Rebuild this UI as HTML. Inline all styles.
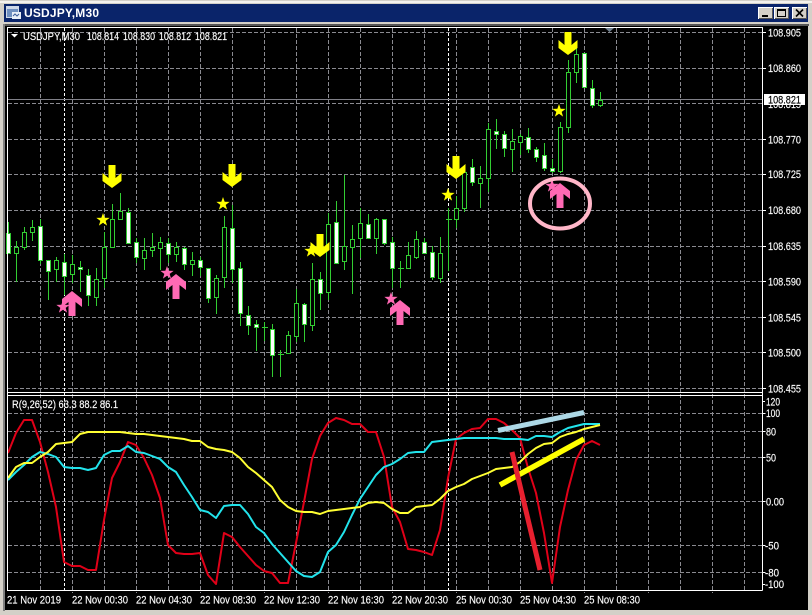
<!DOCTYPE html>
<html><head><meta charset="utf-8"><title>USDJPY,M30</title>
<style>html,body{margin:0;padding:0;background:#d4d0c8}svg{display:block}text{font-family:"Liberation Sans",sans-serif;font-size:11px;fill:#fff;stroke:#fff;stroke-width:.15}</style></head>
<body>
<svg xmlns="http://www.w3.org/2000/svg" width="812" height="615" viewBox="0 0 812 615">
<defs>
<polygon id="s" points="0,-7 1.65,-2.27 6.66,-2.16 2.66,.87 4.11,5.66 0,2.8 -4.11,5.66 -2.66,.87 -6.66,-2.16 -1.65,-2.27"/>
<polygon id="d" points="-3.5,0 3.5,0 3.5,13 9.5,8 9.5,16 0,23 -9.5,16 -9.5,8 -3.5,13"/>
<polygon id="u" points="0,0 10,8 10,16 3.5,11 3.5,25 -3.5,25 -3.5,11 -10,16 -10,8"/>
</defs>
<rect width="812" height="615" fill="#d4d0c8"/>
<rect x="0" y="1" width="812" height="2" fill="#f4f2ee"/>
<rect x="4" y="4" width="804" height="18" fill="#0a246a"/>
<rect x="3" y="24" width="806" height="2" fill="#555"/>
<rect x="3" y="24" width="2" height="587" fill="#808080"/>
<rect x="5" y="26" width="803" height="584" fill="#000"/>

<!-- title bar -->
<rect x="6" y="6" width="13" height="12" fill="#cfd8e8"/><rect x="7" y="9" width="11" height="8" fill="#6f8fc0"/><rect x="12" y="12" width="9" height="7" fill="#e8eef8"/><path d="M13 16l2-2 2 2 2-2" stroke="#3a5a9a" fill="none"/>
<text x="24" y="17" textLength="75" lengthAdjust="spacing" style="font-size:12px;font-weight:bold;stroke:none">USDJPY,M30</text>
<g shape-rendering="crispEdges">
<rect x="758" y="7" width="15" height="12" fill="#d4d0c8"/><path d="M758 18.5h15M772.5 7v12" stroke="#555"/><path d="M758 7.5h15M758.500 7v12" stroke="#fff"/><rect x="762" y="15" width="6" height="2" fill="#000"/>
<rect x="774" y="7" width="15" height="12" fill="#d4d0c8"/><path d="M774 18.500h15M788.500 7v12" stroke="#555"/><path d="M774 7.500h15M774.500 7v12" stroke="#fff"/><rect x="777.500" y="9.500" width="8" height="7" fill="none" stroke="#000"/><rect x="777" y="9" width="9" height="2" fill="#000"/>
<rect x="792" y="7" width="15" height="12" fill="#d4d0c8"/><path d="M792 18.500h15M806.500 7v12" stroke="#555"/><path d="M792 7.500h15M792.500 7v12" stroke="#fff"/>
</g>
<path d="M796 9.500l7 7M803 9.500l-7 7" stroke="#000" stroke-width="1.600"/>

<g shape-rendering="crispEdges" fill="none">
<!-- grid -->
<path stroke="#8a8a90" stroke-dasharray="4 2" d="M8 32.500H766M8 68.500H766M8 103.500H766M8 139.500H766M8 174.500H766M8 210.500H766M8 246.500H766M8 281.500H766M8 317.500H766M8 352.500H766M8 388.500H766M8 413.500H766M8 431.500H766M8 457.500H766M8 501.500H766M8 545.500H766M8 572.500H766"/>
<path stroke="#8a8a90" stroke-dasharray="4 2" d="M40.500 28V590M72.500 28V593M104.500 28V590M136.500 28V593M168.500 28V590M200.500 28V593M232.500 28V590M264.500 28V593M296.500 28V590M328.500 28V593M360.500 28V590M392.500 28V593M424.500 28V590M456.500 28V593M488.500 28V590M520.500 28V593M552.500 28V590M584.500 28V593M616.500 28V590M648.500 28V593M680.500 28V590M712.500 28V593M744.500 28V590"/>
<path stroke="#fff" stroke-dasharray="3 2" d="M64.500 28V590M448.500 28V590"/>
<path stroke="#808088" d="M8 99.500H762"/>
<!-- wicks -->
<path stroke="#32cd32" d="M8.500 222V253M16.500 241V282M24.500 227V250M32.500 220V241M40.500 219V264M48.500 260V300M56.500 257V282M64.500 254V295M72.500 255V283M80.500 261V292M88.500 269V306M96.500 268V306M104.500 232V288M112.500 204V247M120.500 193V220M128.500 208V244M136.500 238V263M144.500 238V270M152.500 233V257M160.500 237V270M168.500 238V263M176.500 242V262M184.500 247V270M192.500 252V276M200.500 257V276M208.500 268V303M216.500 275V314M224.500 216V288M232.500 205V283M240.500 262V326M248.500 306V335M256.500 320V351M264.500 322V341M272.500 324V377M280.500 350V377M288.500 331V354M296.500 289V342M304.500 303V342M312.500 263V331M320.500 272V310M328.500 213V300M336.500 201V264M344.500 175V270M352.500 225V294M360.500 208V258M368.500 214V238M376.500 218V254M384.500 219V245M392.500 237V288M400.500 261V288M408.500 242V268M416.500 231V259M424.500 238V254M432.500 246V280M440.500 237V283M448.500 208V271M456.500 196V228M464.500 172V212M472.500 159V186M480.500 166V208M488.500 123V192M496.500 119V149M504.500 131V157M512.500 129V172M520.500 134V155M528.500 128V153M536.500 147V162M544.500 143V171M552.500 159V173M560.500 122V173M568.500 60V133M576.500 48V83M584.500 53V88M592.500 80V108M600.500 92V107M262 327.500h6M278 354.500h6M398 268.500h6M446 219.500h6"/>
<!-- bear bodies -->
<path stroke="#32cd32" fill="#fff" d="M6.500 233.500h4v20h-4zM38.500 226.500h4v34h-4zM46.500 260.500h4v11h-4zM62.500 262.500h4v14h-4zM78.500 267.500h4v2h-4zM86.500 275.500h4v20h-4zM126.500 212.500h4v31h-4zM134.500 242.500h4v15h-4zM166.500 243.500h4v11h-4zM182.500 248.500h4v16h-4zM198.500 260.500h4v7h-4zM206.500 268.500h4v30h-4zM230.500 228.500h4v41h-4zM238.500 268.500h4v45h-4zM246.500 315.500h4v10h-4zM254.500 324.500h4v3h-4zM270.500 329.500h4v26h-4zM302.500 304.500h4v20h-4zM318.500 279.500h4v14h-4zM334.500 222.500h4v41h-4zM366.500 224.500h4v14h-4zM382.500 219.500h4v24h-4zM390.500 242.500h4v26h-4zM422.500 242.500h4v11h-4zM430.500 252.500h4v25h-4zM470.500 167.500h4v15h-4zM494.500 131.500h4v3h-4zM502.500 134.500h4v14h-4zM526.500 137.500h4v12h-4zM534.500 149.500h4v8h-4zM542.500 155.500h4v13h-4zM550.500 168.500h4v3h-4zM582.500 53.500h4v34h-4zM590.500 88.500h4v17h-4z"/>
<!-- bull bodies -->
<path stroke="#32cd32" fill="#000" d="M14.500 247.500h4v6h-4zM22.500 232.500h4v15h-4zM30.500 227.500h4v5h-4zM54.500 260.500h4v9h-4zM70.500 264.500h4v10h-4zM94.500 279.500h4v18h-4zM102.500 247.500h4v31h-4zM110.500 219.500h4v28h-4zM118.500 211.500h4v8h-4zM142.500 250.500h4v8h-4zM150.500 247.500h4v3h-4zM158.500 242.500h4v6h-4zM174.500 247.500h4v7h-4zM190.500 260.500h4v4h-4zM214.500 278.500h4v19h-4zM222.500 227.500h4v50h-4zM286.500 335.500h4v18h-4zM294.500 303.500h4v33h-4zM310.500 279.500h4v46h-4zM326.500 224.500h4v68h-4zM342.500 246.500h4v15h-4zM350.500 239.500h4v8h-4zM358.500 223.500h4v15h-4zM374.500 219.500h4v19h-4zM406.500 255.500h4v13h-4zM414.500 239.500h4v18h-4zM438.500 253.500h4v25h-4zM454.500 208.500h4v11h-4zM462.500 172.500h4v36h-4zM478.500 178.500h4v5h-4zM486.500 129.500h4v49h-4zM510.500 141.500h4v8h-4zM518.500 136.500h4v6h-4zM558.500 127.500h4v44h-4zM566.500 72.500h4v55h-4zM574.500 54.500h4v18h-4zM598.500 100.500h4v5h-4z"/>
</g>

<!-- markers -->
<g fill="#ffff00">
<use href="#d" x="112" y="165"/><use href="#d" x="232" y="164"/><use href="#d" x="320" y="234"/><use href="#d" x="456" y="156"/><use href="#d" x="568" y="32"/>
<use href="#s" x="103" y="220"/><use href="#s" x="223" y="204"/><use href="#s" x="311" y="251"/><use href="#s" x="448" y="195"/><use href="#s" x="559" y="111"/>
</g>
<g fill="#ff69b4">
<use href="#s" x="63" y="307"/><use href="#s" x="167" y="273"/><use href="#s" x="391" y="299"/><use href="#s" x="552" y="186"/>
<use href="#u" x="72" y="291"/><use href="#u" x="176" y="274"/><use href="#u" x="400" y="300"/><use href="#u" x="560" y="183"/>
</g>
<ellipse cx="560" cy="203.500" rx="30" ry="25" fill="none" stroke="#ffb6c8" stroke-width="4"/>

<!-- indicator -->
<g fill="none" stroke-width="2" stroke-linejoin="round">
<polyline stroke="#e00018" points="8,453 16,433 24,420 32,420 40,442 48,472 56,507 64,562 72,566 80,566 88,570 96,570 104,520 112,478 120,462 128,442 136,445 144,458 152,475 160,498 168,545 176,553 184,554 192,554 200,553 208,575 216,584 224,533 232,537 240,547 248,556 256,565 264,571 272,573 280,583 288,583 296,543 304,502 312,459 320,436 328,423 336,418 344,420 352,424 360,424 368,432 376,432 384,457 392,507 400,522 408,549 416,550 424,552 432,555 440,530 448,478 456,439 464,433 472,429 480,428 488,419 496,419 504,423 512,430 520,438 528,468 536,493 544,533 552,583 560,527 568,490 576,460 584,445 592,441 600,445"/>
<polyline stroke="#22e4ec" points="8,480 16,472 24,465 32,457 40,452 48,454 56,457 64,467 72,468 80,468 88,470 96,468 104,455 112,451 120,451 128,446 136,452 144,453 152,456 160,459 168,467 176,472 184,485 192,497 200,510 208,512 216,518 224,506 232,505 240,505 248,514 256,527 264,533 272,544 280,553 288,562 296,571 304,576 312,577 320,572 328,552 336,545 344,532 352,515 360,499 368,487 376,475 384,467 392,464 400,459 408,453 416,452 424,452 432,442 440,441 448,440 456,439 464,438 472,438 480,438 488,438 496,438 504,439 512,439 520,439 528,440 536,436 544,436 552,437 560,432 568,428 576,426 584,424 592,424 600,424"/>
<polyline stroke="#ffff33" points="8,478 16,467 24,463 32,463 40,457 48,452 56,444 64,443 72,442 80,434 88,432 96,432 104,432 112,432 120,432 128,433 136,434 144,434 152,435 160,436 168,437 176,438 184,439 192,441 200,441 208,447 216,449 224,450 232,452 240,458 248,467 256,473 264,480 272,487 280,500 288,507 296,511 304,512 312,512 320,514 328,511 336,510 344,509 352,508 360,507 368,503 376,502 384,503 392,509 400,513 408,513 416,507 424,506 432,505 440,499 448,491 456,487 464,484 472,479 480,476 488,473 496,469 504,468 512,467 520,462 528,454 536,448 544,444 552,443 560,437 568,434 576,432 584,429 592,427 600,425"/>
</g>
<g stroke-width="5" fill="none">
<path d="M498 430.500L584 412.500" stroke="#add8e6"/>
<path d="M500 485L584 439" stroke="#ffff00" stroke-width="5.500"/>
<path d="M512 452L540 570" stroke="#e8202f"/>
</g>

<!-- frames -->
<g shape-rendering="crispEdges" fill="none" stroke="#fff">
<path d="M7.500 27V590.500M7 27.500H762.500V590.500M7 392.500H762.500M7 395.500H762.500M7 590.500H762.500"/>
<path d="M762 32.500h4M762 68.500h4M762 139.500h4M762 174.500h4M762 210.500h4M762 246.500h4M762 281.500h4M762 317.500h4M762 352.500h4M762 388.500h4M762 401.500h3M762 413.500h3M762 431.500h3M762 457.500h3M762 501.500h3M762 545.500h3M762 572.500h3M762 584.500h3"/>
</g>
<polygon points="605,28 614,28 609.500,32" fill="#708090"/>
<polygon points="11,34 18,34 14.500,37.500" fill="#fff"/>

<!-- text -->
<text x="23" y="40" textLength="57" lengthAdjust="spacingAndGlyphs">USDJPY,M30</text>
<text x="87" y="40" textLength="32" lengthAdjust="spacingAndGlyphs">108.814</text>
<text x="123" y="40" textLength="32" lengthAdjust="spacingAndGlyphs">108.830</text>
<text x="159" y="40" textLength="32" lengthAdjust="spacingAndGlyphs">108.812</text>
<text x="195" y="40" textLength="32" lengthAdjust="spacingAndGlyphs">108.821</text>
<text x="12" y="408" textLength="106" lengthAdjust="spacingAndGlyphs">R(9,26,52) 63.3 88.2 86.1</text>

<text x="768" y="36.500" textLength="33" lengthAdjust="spacingAndGlyphs">108.905</text>
<text x="768" y="72" textLength="33" lengthAdjust="spacingAndGlyphs">108.860</text>
<text x="768" y="108" textLength="33" lengthAdjust="spacingAndGlyphs">108.815</text>
<rect x="764" y="94" width="41" height="11" fill="#fff"/>
<text x="768" y="103.500" textLength="33" lengthAdjust="spacingAndGlyphs" style="fill:#000;stroke:#000">108.821</text>
<text x="768" y="143.500" textLength="33" lengthAdjust="spacingAndGlyphs">108.770</text>
<text x="768" y="178" textLength="33" lengthAdjust="spacingAndGlyphs">108.725</text>
<text x="768" y="214" textLength="33" lengthAdjust="spacingAndGlyphs">108.680</text>
<text x="768" y="250" textLength="33" lengthAdjust="spacingAndGlyphs">108.635</text>
<text x="768" y="285.500" textLength="33" lengthAdjust="spacingAndGlyphs">108.590</text>
<text x="768" y="321.500" textLength="33" lengthAdjust="spacingAndGlyphs">108.545</text>
<text x="768" y="356.500" textLength="33" lengthAdjust="spacingAndGlyphs">108.500</text>
<text x="768" y="392.500" textLength="33" lengthAdjust="spacingAndGlyphs">108.455</text>
<text x="766" y="405.500" textLength="14" lengthAdjust="spacingAndGlyphs">120</text>
<text x="766" y="417" textLength="14" lengthAdjust="spacingAndGlyphs">100</text>
<text x="766" y="435.500" textLength="10" lengthAdjust="spacingAndGlyphs">80</text>
<text x="766" y="461.500" textLength="10" lengthAdjust="spacingAndGlyphs">50</text>
<text x="766" y="505.500" textLength="18" lengthAdjust="spacingAndGlyphs">0.00</text>
<text x="765" y="549.500" textLength="14" lengthAdjust="spacingAndGlyphs">-50</text>
<text x="765" y="576.500" textLength="14" lengthAdjust="spacingAndGlyphs">-80</text>
<text x="765" y="588" textLength="19" lengthAdjust="spacingAndGlyphs">-100</text>

<text x="7" y="603.500" textLength="54" lengthAdjust="spacingAndGlyphs">21 Nov 2019</text>
<text x="72" y="603.500" textLength="56" lengthAdjust="spacingAndGlyphs">22 Nov 00:30</text>
<text x="136" y="603.500" textLength="56" lengthAdjust="spacingAndGlyphs">22 Nov 04:30</text>
<text x="200" y="603.500" textLength="56" lengthAdjust="spacingAndGlyphs">22 Nov 08:30</text>
<text x="264" y="603.500" textLength="56" lengthAdjust="spacingAndGlyphs">22 Nov 12:30</text>
<text x="328" y="603.500" textLength="56" lengthAdjust="spacingAndGlyphs">22 Nov 16:30</text>
<text x="392" y="603.500" textLength="56" lengthAdjust="spacingAndGlyphs">22 Nov 20:30</text>
<text x="456" y="603.500" textLength="56" lengthAdjust="spacingAndGlyphs">25 Nov 00:30</text>
<text x="520" y="603.500" textLength="56" lengthAdjust="spacingAndGlyphs">25 Nov 04:30</text>
<text x="584" y="603.500" textLength="56" lengthAdjust="spacingAndGlyphs">25 Nov 08:30</text>
</svg>
</body></html>
